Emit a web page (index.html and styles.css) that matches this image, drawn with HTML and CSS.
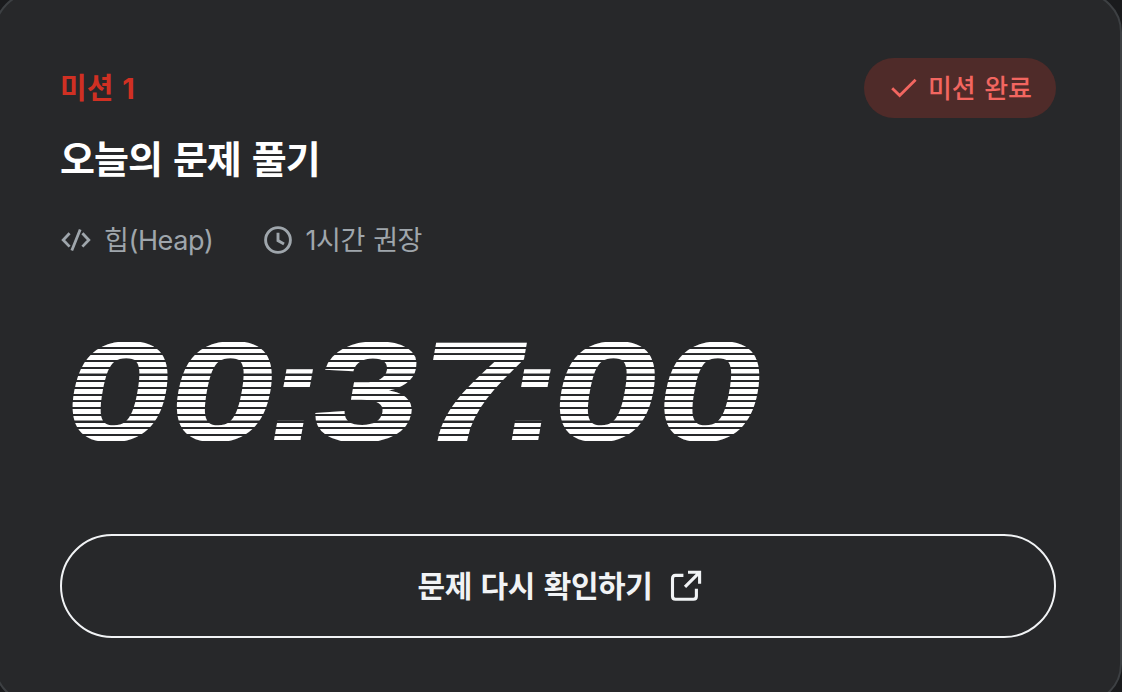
FILE: index.html
```html
<!DOCTYPE html>
<html lang="ko">
<head>
  <meta charset="UTF-8" />
  <meta name="viewport" content="width=device-width, initial-scale=1.0"/>
  <title>오늘의 문제 풀기</title>
  <link rel="stylesheet" href="styles.css">
</head>
<body>

  <section class="card">
    <div class="card-head">
      <p class="mission">미션 1</p>
      <span class="badge">
        <svg class="icon-check" viewBox="0 0 26 20" fill="none" stroke="currentColor" stroke-width="2.8">
          <path d="M1.2 10.2 L8.7 17.6 L24.6 1.8"/>
        </svg>
        <span class="badge-text">미션 완료</span>
      </span>
    </div>

    <h1 class="title">오늘의 문제 풀기</h1>

    <!-- Topic and recommended time -->
    <div class="meta">
      <span class="meta-item">
        <svg class="icon-code" viewBox="0 0 30 22" fill="none" stroke="currentColor" stroke-width="2.8">
          <path d="M8.6 4.2 L2.2 11 L8.6 17.6 M21.4 4.2 L27.8 11 L21.4 17.6 M19.2 0.6 L10.8 21.4"/>
        </svg>
        <span class="meta-text">힙(Heap)</span>
      </span>
      <span class="meta-item">
        <svg class="icon-clock" viewBox="0 0 28 28" fill="none" stroke="currentColor" stroke-width="2.9">
          <circle cx="14" cy="14" r="12.4"/>
          <path d="M14 6.8 V14.6 L20 18"/>
        </svg>
        <span class="meta-text">1시간 권장</span>
      </span>
    </div>

    <!-- Timer -->
    <div class="timer">
      <div class="time">00<span class="colon">:</span>37<span class="colon colon-sec">:</span>00</div>
    </div>

    <button class="retry" type="button">
      <span class="retry-text">문제 다시 확인하기</span>
      <svg class="icon-link" viewBox="0 0 32 32" fill="none" stroke="currentColor" stroke-width="3.1">
        <path d="M13.4 5.4 H5.5 Q2.5 5.4 2.5 8.4 V26.3 Q2.5 29.3 5.5 29.3 H23.4 Q26.4 29.3 26.4 26.3 V18.8"/>
        <path d="M18 2.2 H29.6 V13.8 M29 2.8 L15 16.8"/>
      </svg>
    </button>
  </section>

</body>
</html>
```
FILE: styles.css
```css
body {
  margin: 0;
  overflow: hidden;
  background-color: #1a1b1d;
  font-family: Inter, "Noto Sans CJK KR", sans-serif;
}
.card {
  box-sizing: border-box;
  width: 1128px;
  height: 712px;
  margin: -8px 0 0 -6px;
  padding: 64px;
  border: 2px solid #3d4043;
  border-radius: 40px;
  background-color: #27282a;
}
.card-head {
  display: flex;
  justify-content: space-between;
  align-items: center;
  height: 60px;
}
.mission {
  margin: 0;
  padding-bottom: 4px;
  color: #d03023;
  font-size: 29px;
  font-weight: 700;
  word-spacing: 2px;
}
.badge {
  box-sizing: border-box;
  display: flex;
  align-items: center;
  gap: 11px;
  width: 192px;
  height: 60px;
  padding-left: 27px;
  border-radius: 30px;
  background-color: #4f2b29;
  color: #f26660;
}
.badge-text {
  padding-bottom: 3px;
  font-size: 26px;
  font-weight: 500;
  letter-spacing: -0.2px;
  word-spacing: 2px;
  white-space: nowrap;
}
.icon-check {
  width: 26px;
  height: 20px;
}
.title {
  margin: 11px 0 0;
  color: #fff;
  font-size: 38px;
  font-weight: 700;
  line-height: 60px;
  letter-spacing: -1px;
  word-spacing: 3px;
}
.meta {
  display: flex;
  gap: 50px;
  height: 40px;
  margin-top: 31px;
  color: #9fa6ac;
}
.meta-item {
  display: flex;
  align-items: center;
  gap: 14px;
}
.meta-text {
  padding-top: 2px;
  font-size: 27px;
  letter-spacing: -0.4px;
  word-spacing: 1px;
  line-height: 40px;
  white-space: nowrap;
}
.icon-code {
  width: 30px;
  height: 22px;
  margin-left: 1px;
  margin-right: -1px;
}
.icon-clock {
  width: 28px;
  height: 28px;
}
/* the mask cuts the digits into stripes */
.timer {
  height: 99px;
  margin: 82px 0 0 8px;
  -webkit-mask-image: repeating-linear-gradient(#000 0 4.5px, transparent 4.8px 6.7px, #000 6.714px);
  mask-image: repeating-linear-gradient(#000 0 4.5px, transparent 4.8px 6.7px, #000 6.714px);
}
.time {
  width: max-content;
  color: #fff;
  font-family: "Liberation Sans", Arial, sans-serif;
  font-size: 140px;
  font-weight: 700;
  line-height: 99px;
  white-space: nowrap;
  -webkit-text-stroke: 2px #fff;
  transform: skewX(-10deg) scaleX(1.34);
  transform-origin: 0 50%;
}
.colon {
  margin: 0 -8px 0 -9px;
  -webkit-text-stroke: 0;
}
.colon-sec {
  margin: 0 -7px 0 -17px;
}
.retry {
  display: flex;
  justify-content: center;
  align-items: center;
  gap: 17px;
  width: 996px;
  height: 104px;
  margin-top: 93px;
  padding: 0 0 0 3px;
  border: 2px solid #f1f3f5;
  border-radius: 52px;
  background: none;
  color: #f1f3f5;
  font-family: inherit;
  font-size: 30px;
  font-weight: 700;
  letter-spacing: -0.4px;
  word-spacing: 2px;
  cursor: pointer;
}
.retry-text {
  padding-bottom: 5px;
}
.icon-link {
  width: 32px;
  height: 32px;
}
```
